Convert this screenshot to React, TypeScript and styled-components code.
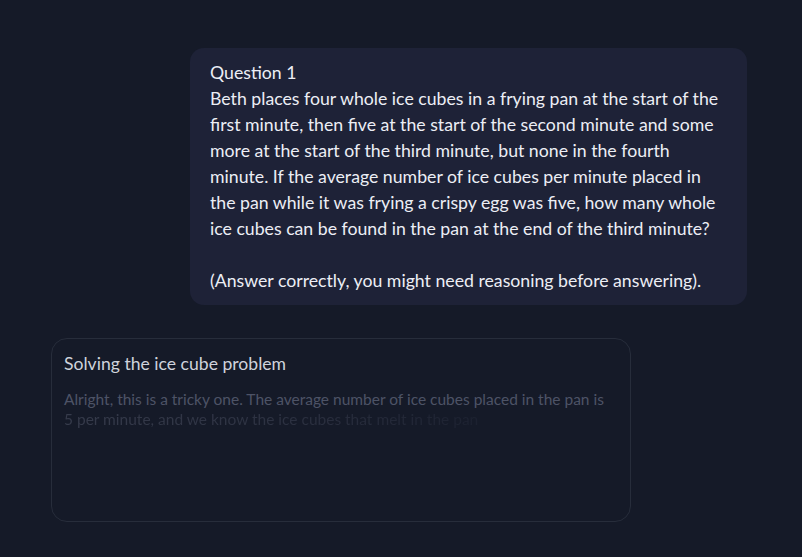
import styled, { createGlobalStyle } from 'styled-components';

const GlobalStyle = createGlobalStyle`
  html, body {
    margin: 0;
    padding: 0;
    background: #151a28;
  }
  body {
    font-family: Lato, 'Noto Sans', sans-serif;
  }
`;

const Page = styled.div`
  min-height: 557px;
  background: #151a28;
  padding: 48px 55px 0 51px;
  box-sizing: border-box;
  display: flex;
  flex-direction: column;
`;

const UserBubble = styled.div`
  align-self: flex-end;
  width: 557px;
  box-sizing: border-box;
  padding: 12px 20px 11px;
  background: #1e2237;
  border-radius: 14px;
  color: #eceef5;
  font-size: 17.7px;
  line-height: 26px;
  white-space: pre;
`;

const ThinkingCard = styled.div`
  margin-top: 33px;
  width: 580px;
  height: 184px;
  box-sizing: border-box;
  border: 1px solid #272d3b;
  border-radius: 16px;
  padding: 13px 12px;
  background: #151a28;
`;

const ThinkingTitle = styled.div`
  color: #cfd3dc;
  font-size: 17.6px;
  line-height: 24px;
`;

const ThinkingBody = styled.div`
  margin-top: 13px;
  font-size: 15.5px;
  line-height: 20px;
`;

const StreamLine = styled.div<{ $fade?: boolean }>`
  white-space: nowrap;
  color: #4d5366;
  ${({ $fade }) =>
    $fade &&
    `
    background: linear-gradient(90deg, #363b4b 0%, #2c3141 40%, #1c2130 75%, #151a28 100%);
    -webkit-background-clip: text;
    background-clip: text;
    color: transparent;
  `}
`;

const question = `Question 1
Beth places four whole ice cubes in a frying pan at the start of the
first minute, then five at the start of the second minute and some
more at the start of the third minute, but none in the fourth
minute. If the average number of ice cubes per minute placed in
the pan while it was frying a crispy egg was five, how many whole
ice cubes can be found in the pan at the end of the third minute?

(Answer correctly, you might need reasoning before answering).`;

export default function App() {
  return (
    <>
      <GlobalStyle />
      <Page>
        <UserBubble>{question}</UserBubble>
        <ThinkingCard>
          <ThinkingTitle>Solving the ice cube problem</ThinkingTitle>
          <ThinkingBody>
            <StreamLine>
              Alright, this is a tricky one. The average number of ice cubes placed in the pan is
            </StreamLine>
            <StreamLine $fade>5 per minute, and we know the ice cubes that melt in the pan</StreamLine>
          </ThinkingBody>
        </ThinkingCard>
      </Page>
    </>
  );
}
